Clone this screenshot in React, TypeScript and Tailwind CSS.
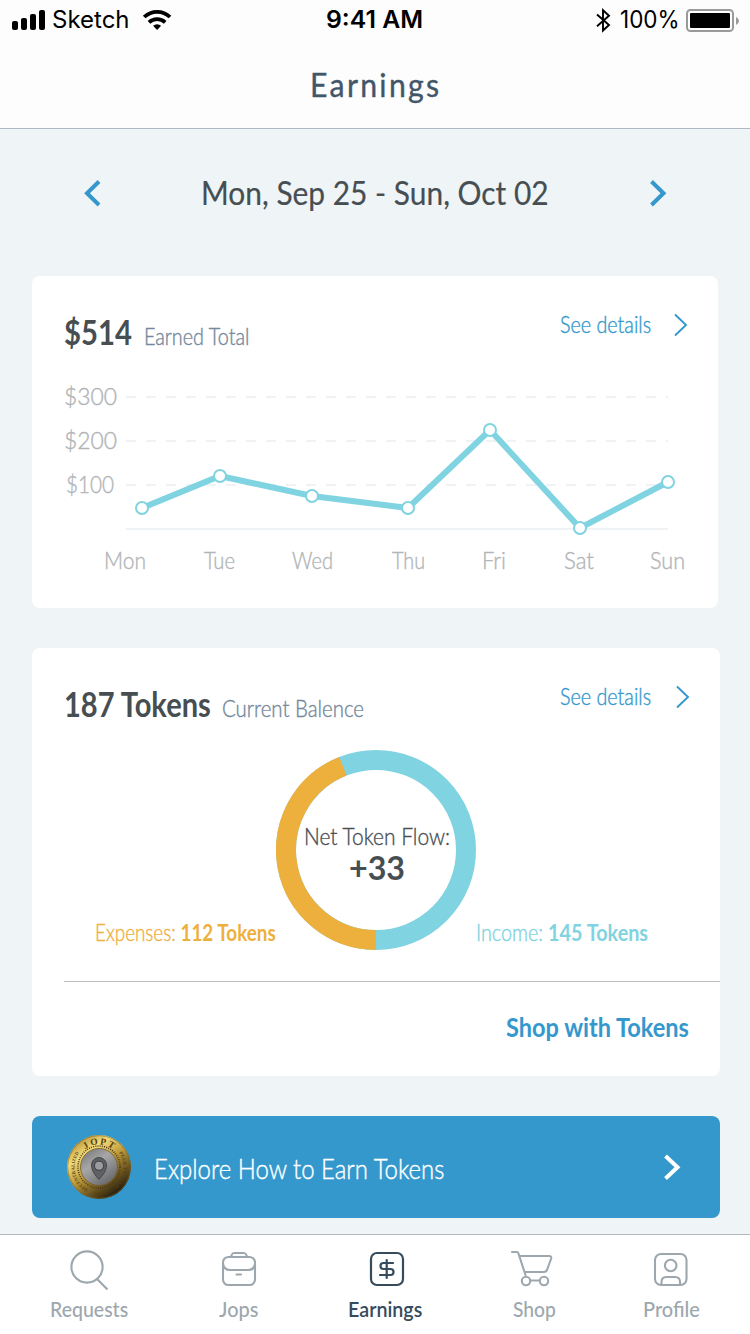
import { useLayoutEffect, useRef, useState } from "react";
import type { ReactNode } from "react";

/* One line of text condensed or widened to fill the width its class sets. */
function FitText({ className, children }: { className: string; children: ReactNode }) {
  const outer = useRef<HTMLSpanElement>(null);
  const inner = useRef<HTMLSpanElement>(null);
  const [scale, setScale] = useState(1);
  useLayoutEffect(() => {
    if (outer.current && inner.current) {
      setScale(outer.current.offsetWidth / inner.current.offsetWidth);
    }
  }, []);
  return (
    <span ref={outer} className={`block shrink-0 whitespace-nowrap ${className}`}>
      <span ref={inner} className="inline-block origin-left" style={{ transform: `scaleX(${scale})` }}>
        {children}
      </span>
    </span>
  );
}

function StatusBar() {
  return (
    <div className="flex h-10 items-center font-['Inter',sans-serif] text-black">
      <svg className="ml-3 h-10 w-[33px] shrink-0" viewBox="12 0 33 40">
        <rect x="12" y="21" width="6" height="9" rx="2" />
        <rect x="21" y="18" width="6" height="12" rx="2" />
        <rect x="30" y="14" width="6" height="16" rx="2" />
        <rect x="39" y="10" width="6" height="20" rx="2" />
      </svg>
      <FitText className="ml-[7px] w-[78px] text-[24px] leading-[42px]">Sketch</FitText>
      <svg className="ml-3 h-10 w-[30px] shrink-0" viewBox="142 0 30 40">
        <g fill="none" stroke="#000" strokeWidth="3.8">
          <path d="M144.2 17a18.6 18.6 0 0 1 25.800 0" />
          <path d="M149 22.300a12 12 0 0 1 16.200 0" />
        </g>
        <path d="M157.100 30l-4-4.200a5.800 5.800 0 0 1 8 0z" />
      </svg>
      <FitText className="ml-[154px] w-[97px] text-[24px] font-semibold leading-[42px]">9:41 AM</FitText>
      <svg className="ml-[172px] h-10 w-4 shrink-0" viewBox="595 0 16 40">
        <path d="M597 14.500l12 10.500-6 5.500V10.200l6 5.500-12 10.500" fill="none" stroke="#000" strokeWidth="1.9" />
      </svg>
      <FitText className="ml-[9px] w-[60px] text-[24px] leading-[42px]">100%</FitText>
      <svg className="ml-1.5 h-10 w-[55px] shrink-0" viewBox="686 0 55 40">
        <rect x="687" y="10" width="46" height="21" rx="3.500" fill="none" stroke="#9a9a9a" strokeWidth="2" />
        <rect x="690" y="13" width="40" height="15" rx="1" />
        <path d="M736 17q3 1.500 3 4t-3 4z" fill="#9a9a9a" />
      </svg>
    </div>
  );
}

function SeeDetails({ chevronClass }: { chevronClass: string }) {
  return (
    <a className="flex items-start text-[#3498cd]">
      <FitText className="-mt-px w-[91px] text-[23px] font-light leading-[30px] [-webkit-text-stroke:0.4px]">
        See details
      </FitText>
      <svg className={`mt-[3px] h-6 w-4 ${chevronClass}`} viewBox="0 0 16 24" fill="none" stroke="currentColor" strokeWidth="1.9">
        <path d="M2 1.500 13 12 2 22.500" />
      </svg>
    </a>
  );
}

const points = [
  { day: "Mon", x: 142, y: 508, tx: 104, w: 42 },
  { day: "Tue", x: 220, y: 476, tx: 204, w: 31 },
  { day: "Wed", x: 312, y: 496, tx: 292, w: 41 },
  { day: "Thu", x: 408, y: 508, tx: 392, w: 33 },
  { day: "Fri", x: 490, y: 430, tx: 482, w: 24 },
  { day: "Sat", x: 580, y: 528, tx: 564, w: 30 },
  { day: "Sun", x: 668, y: 482, tx: 650, w: 35 },
];

const levels = [
  { label: "$300", y: 397, x: 64, w: 53 },
  { label: "$200", y: 441, x: 64, w: 53 },
  { label: "$100", y: 485, x: 66, w: 48 },
];

function EarningsChart() {
  return (
    <svg className="block h-[228px] w-[686px] font-['Lato',sans-serif]" viewBox="32 380 686 228">
      <g fill="#b2b5b8" stroke="#b2b5b8" strokeWidth="0.4" fontSize="23.500" fontWeight="300">
        {levels.map((l) => (
          <text key={l.label} x={l.x} y={l.y + 7.5} textLength={l.w} lengthAdjust="spacingAndGlyphs">
            {l.label}
          </text>
        ))}
        {points.map((p) => (
          <text key={p.day} x={p.tx} y="568.500" textLength={p.w} lengthAdjust="spacingAndGlyphs">
            {p.day}
          </text>
        ))}
      </g>
      <g stroke="#eff3f5" strokeWidth="2">
        {levels.map((l) => (
          <path key={l.label} d={`M126 ${l.y}H668`} strokeDasharray="10 10" />
        ))}
        <path d="M126 529H668" />
      </g>
      <polyline
        points={points.map((p) => `${p.x},${p.y}`).join(" ")}
        fill="none"
        stroke="#80d3e0"
        strokeWidth="6"
      />
      {points.map((p) => (
        <circle key={p.day} cx={p.x} cy={p.y} r="6" fill="#fff" stroke="#80d3e0" strokeWidth="2" />
      ))}
    </svg>
  );
}

function TokenDonut() {
  return (
    <svg className="block h-[200px] w-[200px] shrink-0 font-['Lato',sans-serif]" viewBox="276 750 200 200">
      <circle cx="376" cy="850" r="90" fill="none" stroke="#80d3e0" strokeWidth="20" />
      <path d="M376 940A90 90 0 0 1 342.900 766.300" fill="none" stroke="#edb03c" strokeWidth="20" />
      <text x="304" y="844.500" fontSize="23" fontWeight="300" fill="#464e52" stroke="#464e52" strokeWidth="0.35" textLength="146" lengthAdjust="spacingAndGlyphs">
        Net Token Flow:
      </text>
      <text x="349" y="880" fontSize="33" fontWeight="700" fill="#464e52" textLength="56" lengthAdjust="spacingAndGlyphs">
        +33
      </text>
    </svg>
  );
}

function Coin() {
  return (
    <svg className="h-[66px] w-[66px] shrink-0" viewBox="-33 -33 66 66">
      <defs>
        <linearGradient id="gold" x1="0.15" y1="0.1" x2="0.75" y2="0.95">
          <stop offset="0" stopColor="#bb973d" />
          <stop offset="0.22" stopColor="#f3dc79" />
          <stop offset="0.5" stopColor="#bd9a3c" />
          <stop offset="0.78" stopColor="#66501f" />
          <stop offset="1" stopColor="#211b0d" />
        </linearGradient>
        <linearGradient id="steel" x1="0.1" y1="0" x2="0.8" y2="1">
          <stop offset="0" stopColor="#747577" />
          <stop offset="0.4" stopColor="#a7a7a8" />
          <stop offset="1" stopColor="#626366" />
        </linearGradient>
        <path id="rimTop" d="M-22.500 0A22.500 22.500 0 0 1 22.500 0" />
        <path id="rimLeft" d="M-11 21.900A24.500 24.500 0 0 1 -18.800 -15.700" />
        <path id="rimRight" d="M20 -14.200A24.500 24.500 0 0 1 14 20.100" />
        <path id="rimBottom" d="M-5.500 27.500A28 28 0 0 0 13 24.800" />
      </defs>
      <circle r="32" fill="url(#gold)" />
      <circle r="31.300" fill="none" stroke="#806323" strokeWidth="0.8" opacity="0.7" />
      <circle r="21" fill="none" stroke="#4f3b14" strokeWidth="1.600" strokeDasharray="1 1.200" />
      <circle r="18.500" fill="url(#steel)" stroke="#765c24" strokeWidth="0.8" />
      <path d="M0-9.500a7.500 7.500 0 0 1 7.500 7.500C7.500 4 3.500 8.500 0 12.500-3.500 8.500-7.500 4-7.500-2A7.500 7.500 0 0 1 0-9.500z" fill="#5f6063" stroke="#3f4144" strokeWidth="0.9" />
      <circle cy="-1.300" r="4.600" fill="#9b9c9e" stroke="#45474a" strokeWidth="1.200" />
      <g fill="#57400f" fontWeight="700" className="font-['Liberation_Serif',serif]">
        <text fontSize="9.500" textAnchor="middle" letterSpacing="1.800">
          <textPath href="#rimTop" startOffset="51%">JOPT</textPath>
        </text>
        <text fontSize="4.800" opacity="0.9" textLength="42">
          <textPath href="#rimLeft">DECENTRALIZED</textPath>
        </text>
        <text fontSize="4.800" opacity="0.85" textLength="37">
          <textPath href="#rimRight">PEER TO PEER</textPath>
        </text>
        <text fontSize="4.600" opacity="0.7" textLength="17">
          <textPath href="#rimBottom">TOKEN</textPath>
        </text>
      </g>
    </svg>
  );
}

function TabBar() {
  return (
    <nav className="flex h-[100px] items-start border-t border-[#b4b9bd] bg-white text-[21px] font-medium leading-[28px] text-[#9da7ae]">
      <div className="ml-[50px] flex w-[78px] flex-col items-center">
        <svg className="h-[60px] w-[78px]" viewBox="50 1235 78 60" fill="none" stroke="currentColor" strokeWidth="2.100">
          <circle cx="87" cy="1267" r="15.600" />
          <path d="M97 1279l10.500 10.500" />
        </svg>
        <FitText className="w-[78px]">Requests</FitText>
      </div>
      <div className="ml-[90px] flex w-[41px] flex-col items-center">
        <svg className="h-[60px] w-[41px]" viewBox="218 1235 41 60" fill="none" stroke="currentColor" strokeWidth="2.100" strokeLinecap="round">
          <rect x="223" y="1257" width="32" height="28" rx="5.500" />
          <path d="M231 1257l.6-2q.7-2 2.700-2h9.400q2 0 2.700 2l.6 2M223 1264q1 6 7 6h18q6 0 7-6M236.500 1274.500h4.500" />
        </svg>
        <FitText className="w-[39px]">Jops</FitText>
      </div>
      <div className="ml-[88px] flex w-[75px] flex-col items-center text-[#364b5b]">
        <svg className="h-[60px] w-[75px]" viewBox="347 1235 75 60" fill="none" stroke="currentColor" strokeWidth="2.200" strokeLinecap="round">
          <rect x="371" y="1253" width="32" height="32" rx="6" />
          <path d="M386.700 1260v18M393 1263h-9.500a3 3 0 0 0 0 6h7a3 3 0 0 1 0 6H380" />
        </svg>
        <FitText className="w-[74px] font-semibold">Earnings</FitText>
      </div>
      <div className="ml-[88px] flex w-[44px] flex-col items-center">
        <svg className="h-[60px] w-[44px]" viewBox="510 1235 44 60" fill="none" stroke="currentColor" strokeWidth="2.100" strokeLinecap="round" strokeLinejoin="round">
          <path d="M512 1252h5q1 0 1.300 1l7.200 22M519.500 1256H549q3 0 2 3l-4 11q-.8 2-3 2h-19.500M530.500 1280.500h9" />
          <circle cx="526" cy="1281" r="4.200" />
          <circle cx="544" cy="1281" r="4.200" />
        </svg>
        <FitText className="ml-1 w-[43px]">Shop</FitText>
      </div>
      <div className="ml-[88px] flex w-[58px] flex-col items-center">
        <svg className="h-[60px] w-[58px]" viewBox="642 1235 58 60" fill="none" stroke="currentColor" strokeWidth="2.100">
          <rect x="655" y="1254" width="31.500" height="31" rx="6" />
          <circle cx="670.700" cy="1265.500" r="5.800" />
          <path d="M661.500 1285v-3q0-5 5-5h8.500q5 0 5 5v3" />
        </svg>
        <FitText className="w-[57px]">Profile</FitText>
      </div>
    </nav>
  );
}

export default function App() {
  return (
    <div className="flex h-[1334px] w-[750px] flex-col overflow-hidden bg-[#eff4f7] font-['Lato',sans-serif]">
      <header className="h-[129px] border-b border-[#aeb9c1] bg-[#fdfdfd]">
        <StatusBar />
        <h1 className="flex pl-[310px] pt-[24px] text-[33px] font-normal leading-[40px] tracking-[2.5px] text-[#42566a] [-webkit-text-stroke:0.4px]">
          <FitText className="w-[131px]">Earnings</FitText>
        </h1>
      </header>

      <div className="flex h-[147px] items-start pl-[82px] pt-[42px] text-[#3498cd]">
        <svg className="mt-2 h-[28px] w-[20px]" viewBox="82 179 20 28" fill="none" stroke="currentColor" strokeWidth="4">
          <path d="M99 181.500 87 193.200 99 205" />
        </svg>
        <FitText className="ml-[99px] mt-px w-[348px] text-[33px] font-normal leading-[40px] text-[#464e52] [-webkit-text-stroke:0.2px]">
          Mon, Sep 25 - Sun, Oct 02
        </FitText>
        <svg className="ml-[99px] mt-2 h-[28px] w-[20px]" viewBox="648 179 20 28" fill="none" stroke="currentColor" strokeWidth="4">
          <path d="M651.500 181.500l12 11.700-12 11.800" />
        </svg>
      </div>

      <section className="ml-8 h-[332px] w-[686px] rounded-lg bg-white">
        <div className="flex h-[104px] items-start justify-between pl-8 pr-[29px] pt-[34px]">
          <div className="mt-px flex items-baseline gap-3">
            <FitText className="w-[68px] text-[34px] font-bold leading-[42px] text-[#464e52]">$514</FitText>
            <FitText className="w-[105px] text-[23px] font-light leading-[30px] text-[#74899c] [-webkit-text-stroke:0.4px]">
              Earned Total
            </FitText>
          </div>
          <SeeDetails chevronClass="ml-[22px]" />
        </div>
        <EarningsChart />
      </section>

      <section className="ml-8 mt-10 h-[428px] w-[688px] rounded-lg bg-white">
        <div className="flex h-[102px] items-start justify-between pl-8 pr-[29px] pt-[34px]">
          <div className="mt-px flex items-baseline gap-[11px]">
            <FitText className="w-[147px] text-[34px] font-bold leading-[42px] text-[#464e52]">187 Tokens</FitText>
            <FitText className="w-[142px] text-[23px] font-light leading-[30px] text-[#74899c] [-webkit-text-stroke:0.4px]">
              Current Balence
            </FitText>
          </div>
          <SeeDetails chevronClass="ml-[24px]" />
        </div>
        <div className="flex items-end pl-[63px] text-[23px] leading-[30px]">
          <FitText className="mb-[3px] w-[181px] text-[#edb03c]">
            <span className="font-light [-webkit-text-stroke:0.4px]">Expenses:</span> <b>112 Tokens</b>
          </FitText>
          <TokenDonut />
          <FitText className="mb-[3px] w-[172px] text-[#80d3e0]">
            <span className="font-light [-webkit-text-stroke:0.4px]">Income:</span> <b>145 Tokens</b>
          </FitText>
        </div>
        <div className="ml-8 mt-[31px] flex justify-end border-t border-[#b9bcc0] pr-[31px] pt-[28px]">
          <FitText className="w-[183px] text-[27px] font-bold leading-[34px] text-[#3498cd]">Shop with Tokens</FitText>
        </div>
      </section>

      <button className="ml-8 mt-10 flex h-[102px] w-[688px] shrink-0 items-center rounded-lg bg-[#3498cd] pl-[34px] text-left text-white">
        <Coin />
        <FitText className="ml-[22px] mt-1 w-[290px] text-[27px] font-light leading-[34px] [-webkit-text-stroke:0.4px]">
          Explore How to Earn Tokens
        </FitText>
        <svg className="ml-[218px] h-[28px] w-[20px]" viewBox="0 0 20 28" fill="none" stroke="currentColor" strokeWidth="4">
          <path d="M3.500 3 15.500 14.200 3.500 25.500" />
        </svg>
      </button>

      <div className="mt-4">
        <TabBar />
      </div>
    </div>
  );
}
